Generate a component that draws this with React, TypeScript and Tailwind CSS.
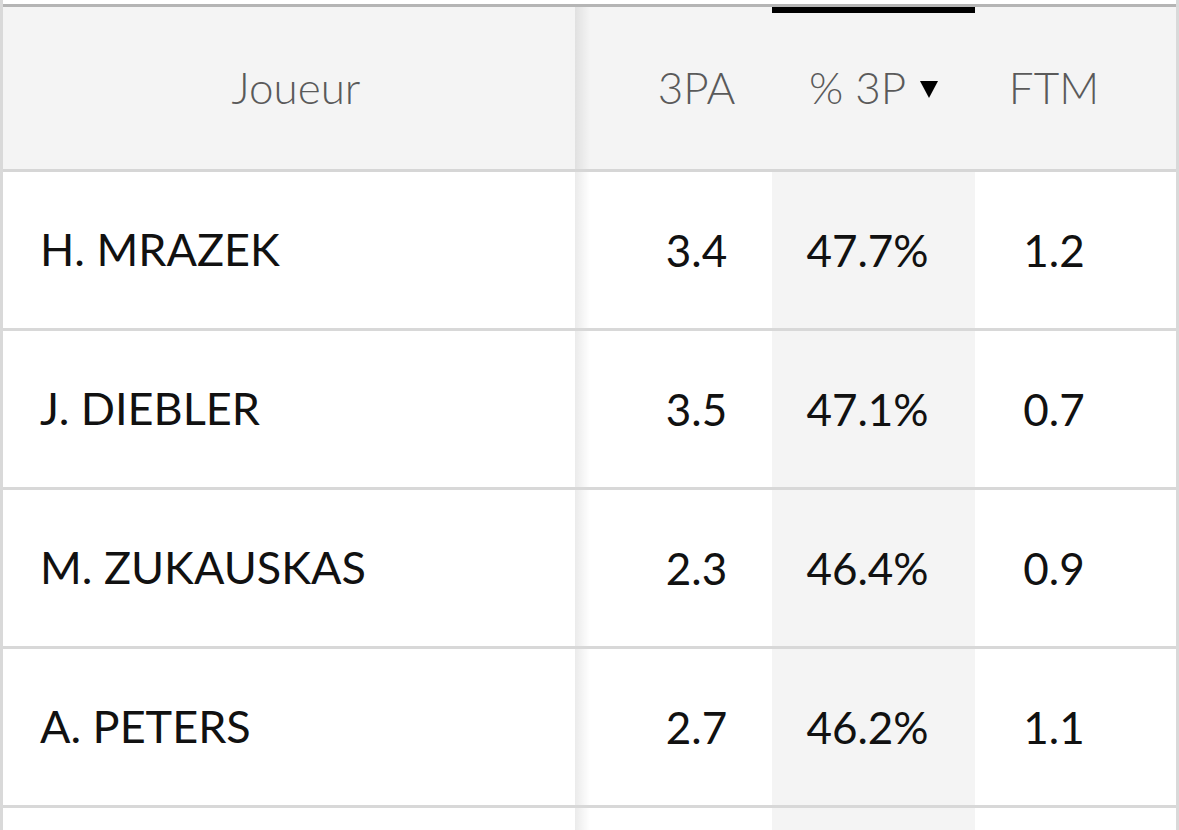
const players = [
  { name: "H. MRAZEK", pa: "3.4", pct: "47.7%", ftm: "1.2" },
  { name: "J. DIEBLER", pa: "3.5", pct: "47.1%", ftm: "0.7" },
  { name: "M. ZUKAUSKAS", pa: "2.3", pct: "46.4%", ftm: "0.9" },
  { name: "A. PETERS", pa: "2.7", pct: "46.2%", ftm: "1.1" },
  { name: "", pa: "", pct: "", ftm: "" },
];

const stickyShadow =
  "relative after:absolute after:top-0 after:bottom-0 after:left-full after:w-[15px] after:bg-linear-to-r after:from-black/[0.08] after:to-transparent after:content-[''] after:z-10";

export default function App() {
  return (
    <div
      className="h-[830px] w-[1179px] overflow-hidden bg-white border-x-[3px] border-[#d9d9d9] pt-[4px]"
      style={{ fontFamily: "Lato, 'Open Sans', sans-serif" }}
    >
      <div className="overflow-hidden">
        {/* header */}
        <div className="flex h-[168px] bg-[#f4f4f4] border-t-[3px] border-b-[3px] border-t-[#b5b5b5] border-b-[#d6d6d6] text-[44px] font-light text-[#5a5a5a]">
          <div className={`w-[572px] shrink-0 flex items-center justify-center pl-[14px] pb-[3px] ${stickyShadow}`}>
            Joueur
          </div>
          <div className="w-[197px] shrink-0 flex items-center justify-center pl-[46px] pb-[3px]">3PA</div>
          <div className="relative w-[203px] shrink-0 flex items-center justify-center gap-[14px] pb-[3px]">
            <div className="absolute top-0 left-0 right-0 h-[6px] bg-black" />
            <span>% 3P</span>
            <svg width="18" height="17" viewBox="0 0 18 17" className="mt-[6px]">
              <path d="M0 0 L18 0 L9 17 Z" fill="#000" />
            </svg>
          </div>
          <div className="w-[158px] shrink-0 flex items-center justify-center pb-[3px]">FTM</div>
          <div className="w-[158px] shrink-0 flex items-center justify-center pb-[3px]">FTA</div>
        </div>

        {/* rows */}
        {players.map((p, i) => (
          <div
            key={i}
            className="flex h-[159px] border-b-[3px] border-[#d8d8d8] text-[44px] text-[#111]"
          >
            <div className={`w-[572px] shrink-0 flex items-center pl-[37px] text-[45px] ${stickyShadow}`}>
              {p.name}
            </div>
            <div className="w-[197px] shrink-0 flex items-center justify-center pl-[46px]">{p.pa}</div>
            <div className="w-[203px] shrink-0 flex items-center justify-center bg-[#f4f4f4] pr-[12px]">
              {p.pct}
            </div>
            <div className="w-[158px] shrink-0 flex items-center justify-center">{p.ftm}</div>
            <div className="w-[158px] shrink-0" />
          </div>
        ))}
      </div>
    </div>
  );
}
